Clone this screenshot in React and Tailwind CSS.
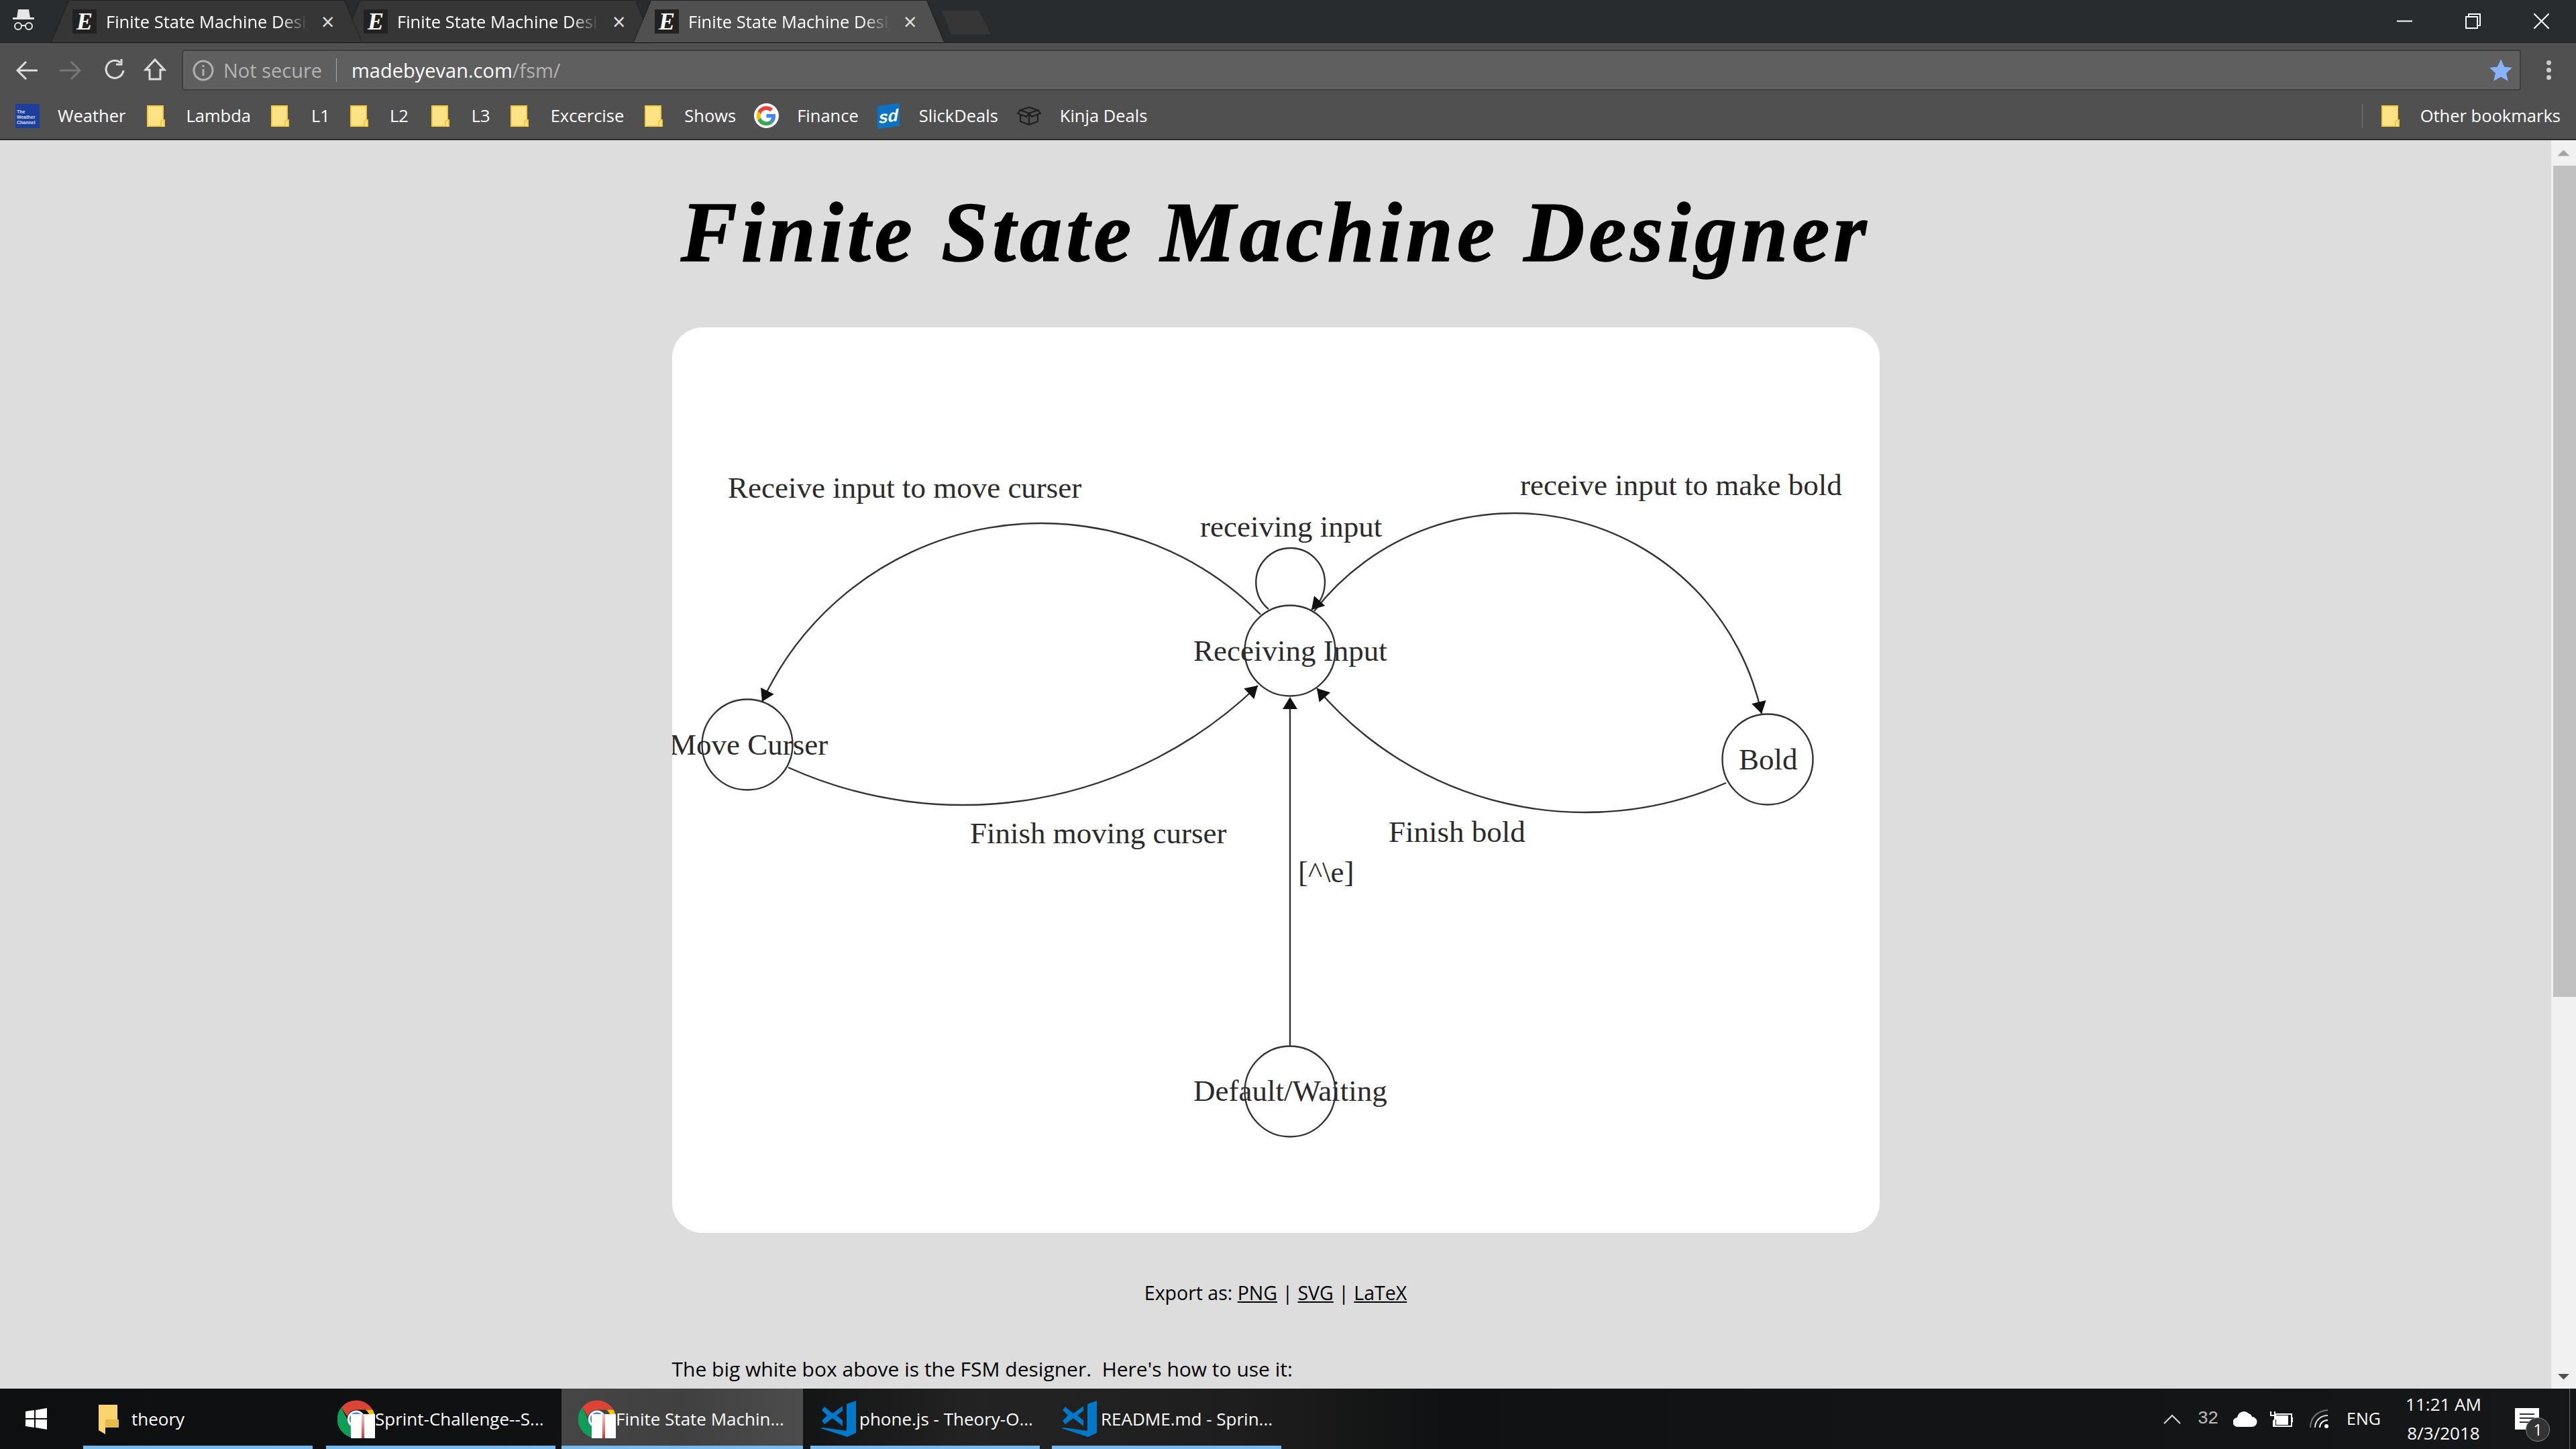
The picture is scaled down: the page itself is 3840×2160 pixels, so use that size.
import React from 'react';

// circle through three points -> svg arc plus the arrow head at the last point
function arcThrough(a, m, b) {
  const d = 2 * (a[0] * (m[1] - b[1]) + m[0] * (b[1] - a[1]) + b[0] * (a[1] - m[1]));
  const s = (p) => p[0] * p[0] + p[1] * p[1];
  const cx = (s(a) * (m[1] - b[1]) + s(m) * (b[1] - a[1]) + s(b) * (a[1] - m[1])) / d;
  const cy = (s(a) * (b[0] - m[0]) + s(m) * (a[0] - b[0]) + s(b) * (m[0] - a[0])) / d;
  const r = Math.hypot(a[0] - cx, a[1] - cy);
  const cross = (m[0] - a[0]) * (b[1] - a[1]) - (m[1] - a[1]) * (b[0] - a[0]);
  const sweep = cross > 0 ? 1 : 0;
  const ang = (p) => Math.atan2(p[1] - cy, p[0] - cx);
  let delta = ang(b) - ang(a);
  if (sweep && delta < 0) delta += Math.PI * 2;
  if (!sweep && delta > 0) delta -= Math.PI * 2;
  const large = Math.abs(delta) > Math.PI ? 1 : 0;
  // tangent at the end of the arc, pulled in a little so the head sits on the chord
  const t = ang(b) + (sweep ? Math.PI / 2 : -Math.PI / 2) + (sweep ? -9 / r : 9 / r);
  return {
    path: `M${a[0]} ${a[1]} A${r} ${r} 0 ${large} ${sweep} ${b[0]} ${b[1]}`,
    head: arrowHead(b[0], b[1], t),
  };
}

function arrowHead(x, y, t) {
  const dx = Math.cos(t);
  const dy = Math.sin(t);
  return `${x},${y} ${x - 18 * dx + 11 * dy},${y - 18 * dy - 11 * dx} ${x - 18 * dx - 11 * dy},${y - 18 * dy + 11 * dx}`;
}

// coordinates are page pixels minus the canvas origin (1002, 488)
const o = (x, y) => [x - 1002, y - 488];
const arcs = [
  arcThrough(o(1879, 916), o(1548, 780), o(1136, 1046)),
  arcThrough(o(1175, 1144), o(1440, 1200), o(1875, 1022)),
  arcThrough(o(1959, 911), o(2256, 765), o(2626, 1064)),
  arcThrough(o(2573, 1167), o(2359, 1211), o(1963, 1026)),
  arcThrough(o(1891, 908), o(1923, 817), o(1955, 909)),
];

const states = [
  [921, 482],
  [112, 622],
  [1633, 644],
  [921, 1139],
];

const labels = [
  { t: 'Receive input to move curser', x: 83, y: 254 },
  { t: 'receiving input', x: 787, y: 312 },
  { t: 'receive input to make bold', x: 1264, y: 250 },
  { t: 'Receiving Input', x: 777, y: 497 },
  { t: 'Move Curser', x: -4, y: 637 },
  { t: 'Finish moving curser', x: 444, y: 769 },
  { t: 'Finish bold', x: 1068, y: 767 },
  { t: '[^\\e]', x: 933, y: 827 },
  { t: 'Bold', x: 1590, y: 659 },
  { t: 'Default/Waiting', x: 777, y: 1153 },
];

function Diagram() {
  return (
    <svg viewBox="0 0 1800 1350" className="block w-[1800px] h-[1350px] font-['Liberation_Serif',serif] text-[45px]">
      {states.map(([cx, cy]) => (
        <circle key={cx + '-' + cy} cx={cx} cy={cy} r="67.5" fill="none" stroke="#333" strokeWidth="2.4" />
      ))}
      {arcs.map((a) => (
        <g key={a.path}>
          <path d={a.path} fill="none" stroke="#333" strokeWidth="2.4" />
          <polygon points={a.head} fill="#111" />
        </g>
      ))}
      <line x1="921" y1="1071" x2="921" y2="560" stroke="#333" strokeWidth="2.4" />
      <polygon points={arrowHead(921, 551, -Math.PI / 2)} fill="#111" />
      {labels.map((l) => (
        <text key={l.t} x={l.x} y={l.y} fill="#2b2b2b">{l.t}</text>
      ))}
    </svg>
  );
}

function Favicon() {
  return (
    <span className="w-[36px] h-[36px] shrink-0 bg-[#222] flex items-center justify-center font-['Liberation_Serif',serif] font-bold italic text-[36px] leading-none text-white">E</span>
  );
}

function Tab({ active, wrap, children }) {
  return (
    <div className={`relative w-[462px] h-[62px] -ml-[28px] first:ml-0 drop-shadow-[0_0_1px_#111] ${wrap}`}>
      <div className={`w-full h-full pl-[31px] flex items-center [clip-path:polygon(26px_0,436px_0,462px_100%,0_100%)] ${active ? 'bg-[#505050]' : 'bg-[#363636]'}`}>
        <Favicon />
        <span className="ml-[14px] w-[301px] overflow-hidden whitespace-nowrap text-[25.5px] text-white [mask-image:linear-gradient(90deg,#000_86%,transparent)]">{children}</span>
        <span className="ml-[20px] text-[34px] leading-none text-[#ddd]">×</span>
      </div>
    </div>
  );
}

function Incognito() {
  return (
    <svg width="32" height="32" viewBox="0 0 32 32" fill="none">
      <path d="M8 1h16l2 13H6z" fill="#e6e6e6" />
      <rect x="0" y="13" width="32" height="3" fill="#e6e6e6" />
      <circle cx="8" cy="26" r="5" stroke="#e6e6e6" strokeWidth="2" />
      <circle cx="24" cy="26" r="5" stroke="#e6e6e6" strokeWidth="2" />
      <path d="M13 25h6" stroke="#e6e6e6" strokeWidth="2" />
    </svg>
  );
}

function Folder() {
  return (
    <svg width="27" height="32" viewBox="0 0 27 32" className="shrink-0">
      <path d="M1 1h23v23h2v7H1z" fill="#fee286" stroke="#f2c93f" strokeWidth="2" />
      <path d="M21 31v-7l3-2h2v9" fill="#fee286" stroke="#f2c93f" strokeWidth="2" />
    </svg>
  );
}

function Bookmark({ icon, label, className }) {
  return (
    <div className={`flex items-center shrink-0 ${className}`}>
      {icon}
      <span className="whitespace-nowrap">{label}</span>
    </div>
  );
}

function WeatherIcon() {
  return (
    <div className="w-[36px] h-[36px] bg-[#1c3f9e] text-[7px] leading-[8px] text-white/80 pl-[2px] pt-[8px] font-['Liberation_Sans',sans-serif] font-bold">
      The Weather Channel
    </div>
  );
}

function GoogleIcon() {
  return (
    <svg width="37" height="37" viewBox="0 0 48 48" className="shrink-0">
      <circle cx="24" cy="24" r="24" fill="#fff" />
      <path d="M24 13a11 11 0 0 1 7.4 2.9l5.4-5.4A19 19 0 0 0 7 15.6l6.3 4.9A11.4 11.4 0 0 1 24 13z" fill="#ea4335" />
      <path d="M41.6 24.6c0-1.3-.1-2.6-.4-3.8H24v7.2h9.9a8.500 8.500 0 0 1-3.700 5.600l6 4.600c3.500-3.200 5.400-8 5.400-13.600z" fill="#4285f4" />
      <path d="M13.300 28.200a11.400 11.400 0 0 1 0-7.700L7 15.600a19 19 0 0 0 0 17.500z" fill="#fbbc05" />
      <path d="M24 43c5.100 0 9.400-1.700 12.200-4.600l-6-4.600c-1.600 1.100-3.600 1.800-6.200 1.800-4.900 0-9-3.300-10.700-7.600L7 33a19 19 0 0 0 17 10z" fill="#34a853" />
    </svg>
  );
}

function SlickIcon() {
  return (
    <div className="w-[33px] h-[34px] bg-[#0b72c4] -skew-y-[8deg] flex items-center justify-center font-['Liberation_Sans',sans-serif] font-bold italic text-[25px] leading-none text-white">
      sd
    </div>
  );
}

function BoxIcon() {
  return (
    <svg width="36" height="28" viewBox="0 0 36 28" fill="none" stroke="#1d1d1d" strokeWidth="2">
      <path d="M18 1 31 5 18 10 5 5zM5 5 1 10l13 5 4-5 4 5 13-5-4-5M5 12v10l13 5 13-5V12M18 10v17" />
    </svg>
  );
}

function ChromeIcon() {
  return (
    <div className="relative w-[56px] h-[57px] shrink-0">
      <svg width="56" height="57" viewBox="0 0 48 48">
        <path d="M24 0a24 24 0 0 1 21 12H24a12 12 0 0 0-11.500 8.500L5 9A24 24 0 0 1 24 0z" fill="#db4437" />
        <path d="M45 12a24 24 0 0 1-14 35l10-22a12 12 0 0 0-5-13z" fill="#f4c20d" />
        <path d="M5 9l8 16a12 12 0 0 0 14 8l-5 15A24 24 0 0 1 5 9z" fill="#0f9d58" />
        <circle cx="24" cy="24" r="10" fill="#4285f4" stroke="#fff" strokeWidth="2.500" />
      </svg>
      <div className="absolute right-0 bottom-0 w-[36px] h-[36px] bg-white flex justify-center">
        <div className="w-[4px] h-full bg-gradient-to-b from-[#f3c4c4] to-[#d92a2a]" />
      </div>
    </div>
  );
}

function CodeIcon() {
  return (
    <svg width="54" height="54" viewBox="0 0 54 54" className="shrink-0">
      <path d="M39 5 53 0v48l-13 6L0 41l4-1 35 5z" fill="#0079cb" />
      <path d="M33 8v30L18 26 6 35l-4-5 8-8-8-8 4-5 12 10zM33 15l-9 7 9 7z" fill="#0079cb" fillRule="evenodd" />
    </svg>
  );
}

function TaskItem({ icon, label, className, active }) {
  return (
    <div className={`relative h-full flex items-center shrink-0 text-[26px] text-white ${active ? 'bg-[linear-gradient(90deg,#454545,#404040_50%,#4b4c4b)]' : ''} ${className}`}>
      {icon}
      <span className="whitespace-nowrap">{label}</span>
      <div className="absolute left-0 right-0 bottom-0 h-[5px] bg-[#76b9ed]" />
    </div>
  );
}

function Toolbar() {
  return (
    <div className="h-[71px] pt-[10px] bg-[#505050] flex items-center shrink-0">
      <svg width="250" height="40" viewBox="0 0 250 40" fill="none" className="ml-[16px] shrink-0" strokeWidth="3">
        <path d="M40 20H12m11-13L10 20l13 13" stroke="#ddd" />
        <path d="M73 20h28m-11-13 13 13-13 13" stroke="#777" />
        <path d="M163 8a13 13 0 1 0 5 12M165 3v8h-8" stroke="#ddd" />
        <path d="M201 19l14-15 14 15h-6v14h-16V19z" stroke="#ddd" />
      </svg>
      <div className="ml-[5px] w-[3487px] h-[61px] bg-[#5f5f5f] border-2 border-[#3e3e3e] rounded-[4px] flex items-center pl-[14px] pr-[11px] text-[29px]">
        <svg width="32" height="32" viewBox="0 0 32 32" fill="none" stroke="#b0b0b0" strokeWidth="3" className="shrink-0">
          <circle cx="16" cy="16" r="14" />
          <path d="M16 14v10M16 8v3" />
        </svg>
        <span className="ml-[14px] text-[#b4b4b4] whitespace-nowrap w-[149px]">Not secure</span>
        <div className="ml-[19px] w-[1px] h-[35px] bg-[#aaa]" />
        <span className="ml-[22px] text-white whitespace-nowrap">madebyevan.com<span className="text-[#b4b4b4]">/fsm/</span></span>
        <svg width="34" height="33" viewBox="0 0 24 23" className="ml-auto shrink-0">
          <path d="M12 0l3.700 8.200 8.300.7-6.300 5.700 1.900 8.400L12 18.600 4.400 23l1.900-8.400L0 8.900l8.300-.7z" fill="#88b3f9" />
        </svg>
      </div>
      <div className="ml-[38px] flex flex-col gap-[4px]">
        <span className="w-[7px] h-[7px] rounded-full bg-[#ccc]" />
        <span className="w-[7px] h-[7px] rounded-full bg-[#ccc]" />
        <span className="w-[7px] h-[7px] rounded-full bg-[#ccc]" />
      </div>
    </div>
  );
}

function BookmarkBar() {
  return (
    <div className="h-[74px] pt-[3px] bg-[#505050] border-b-2 border-[#2a2a2a] flex items-center pl-[23px] pr-[23px] text-[25.5px] text-white shrink-0">
      <Bookmark icon={<WeatherIcon />} label="Weather" className="gap-[27px]" />
      <Bookmark icon={<Folder />} label="Lambda" className="ml-[31px] gap-[32px]" />
      <Bookmark icon={<Folder />} label="L1" className="ml-[30px] gap-[33px]" />
      <Bookmark icon={<Folder />} label="L2" className="ml-[30px] gap-[32px]" />
      <Bookmark icon={<Folder />} label="L3" className="ml-[34px] gap-[33px]" />
      <Bookmark icon={<Folder />} label="Excercise" className="ml-[30px] gap-[33px]" />
      <Bookmark icon={<Folder />} label="Shows" className="ml-[31px] gap-[32px]" />
      <Bookmark icon={<GoogleIcon />} label="Finance" className="ml-[27px] gap-[27px]" />
      <Bookmark icon={<SlickIcon />} label="SlickDeals" className="ml-[28px] gap-[29px]" />
      <Bookmark icon={<BoxIcon />} label="Kinja Deals" className="ml-[28px] gap-[28px]" />
      <div className="ml-auto w-[1px] h-[36px] bg-[#777]" />
      <Bookmark icon={<Folder />} label="Other bookmarks" className="ml-[28px] gap-[31px]" />
    </div>
  );
}

function TabStrip() {
  return (
    <div className="h-[64px] bg-[#292c2f] border-b border-[#1c1c1c] flex items-end relative shrink-0">
      <div className="absolute left-[19px] top-[13px]"><Incognito /></div>
      <div className="ml-[77px] flex items-end">
        <Tab wrap="z-20">Finite State Machine Designer</Tab>
        <Tab wrap="z-10">Finite State Machine Designer</Tab>
        <Tab wrap="z-30" active>Finite State Machine Designer</Tab>
      </div>
      <div className="ml-[-3px] mb-[12px] w-[73px] h-[35px] bg-[#363636] [clip-path:polygon(0_0,55px_0,73px_100%,14px_100%)]" />
      <div className="ml-auto mr-[40px] self-center flex items-center gap-[79px]">
        <svg width="23" height="23" viewBox="0 0 23 23"><path d="M0 11.500h23" stroke="#fff" strokeWidth="2" /></svg>
        <svg width="23" height="23" viewBox="0 0 23 23" fill="none" stroke="#fff" strokeWidth="2"><rect x="1" y="5" width="17" height="17" /><path d="M5 5V1h17v17h-4" /></svg>
        <svg width="23" height="23" viewBox="0 0 23 23" stroke="#fff" strokeWidth="2"><path d="M0 0l23 23M23 0 0 23" /></svg>
      </div>
    </div>
  );
}

function Scrollbar() {
  return (
    <div className="w-[37px] h-full bg-[#f1f1f1] flex flex-col items-center shrink-0">
      <div className="h-[38px] w-full flex items-center justify-center shrink-0">
        <div className="w-[18px] h-[9px] bg-[#a3a3a3] [clip-path:polygon(50%_0,100%_100%,0_100%)]" />
      </div>
      <div className="h-[1239px] w-[34px] ml-[2px] bg-[#c1c1c1] shrink-0" />
      <div className="mt-auto h-[36px] w-full flex items-center justify-center shrink-0">
        <div className="w-[18px] h-[9px] bg-[#505050] [clip-path:polygon(0_0,100%_0,50%_100%)]" />
      </div>
    </div>
  );
}

function Tray() {
  return (
    <div className="ml-auto h-full flex items-center text-white text-[25px] shrink-0">
      <svg width="26" height="15" viewBox="0 0 26 15" fill="none" stroke="#ddd" strokeWidth="2"><path d="M1 14 13 2l12 12" /></svg>
      <span className="ml-[25px] text-[#bbb] font-['Liberation_Mono',monospace] font-light text-[27px] tracking-[-1px]">32</span>
      <svg width="36" height="24" viewBox="0 0 36 24" fill="#fff" className="ml-[23px]"><path d="M7 24a7 7 0 0 1-1-14 10 10 0 0 1 17-6 7 7 0 0 1 5 5 7.500 7.500 0 0 1 0 15z" /></svg>
      <svg width="36" height="25" viewBox="0 0 36 25" fill="none" stroke="#fff" strokeWidth="2" className="ml-[18px]">
        <path d="M2 1v6M8 1v6M1 7h8v5l-3 3v9" />
        <rect x="8" y="5" width="25" height="18" />
        <rect x="11" y="8" width="16" height="12" fill="#fff" />
        <path d="M34 10v7" />
      </svg>
      <svg width="30" height="28" viewBox="0 0 30 28" fill="none" className="ml-[24px]">
        <path d="M1 27C1 12 12 2 27 1" stroke="#777" strokeWidth="2" />
        <path d="M8 27c0-10 8-18 19-18" stroke="#ddd" strokeWidth="2" />
        <path d="M15 27c0-6 5-11 12-11" stroke="#fff" strokeWidth="2" />
        <circle cx="25" cy="25" r="3" fill="#fff" />
      </svg>
      <span className="ml-[25px]">ENG</span>
      <div className="ml-[37px] w-[113px] flex flex-col items-center text-[26px] leading-[43px]">
        <span className="whitespace-nowrap">11:21 AM</span>
        <span>8/3/2018</span>
      </div>
      <div className="relative ml-[50px] w-[36px] h-[32px] bg-white flex flex-col gap-[4px] px-[7px] pt-[8px]">
        <div className="h-[2px] bg-[#333]" />
        <div className="h-[2px] bg-[#333]" />
        <div className="h-[2px] bg-[#333]" />
        <div className="absolute left-[16px] top-[14px] w-[36px] h-[36px] rounded-full bg-[#333] border border-[#888] flex items-center justify-center text-[24px] text-white">1</div>
      </div>
      <div className="ml-[45px] w-[1px] h-full bg-[#666]" />
      <div className="w-[9px]" />
    </div>
  );
}

function Taskbar() {
  return (
    <div className="h-[90px] flex items-center bg-[linear-gradient(90deg,#0e0f10_0%,#111213_30%,#232323_38%,#1e1e1e_48%,#101112_56%,#161718_100%)] font-['Open_Sans',sans-serif] shrink-0">
      <svg width="32" height="32" viewBox="0 0 32 32" fill="#fff" className="ml-[38px] shrink-0">
        <path d="M0 5l13-2v12H0zM15 3l17-3v15H15zM0 17h13v12L0 27zM15 17h17v15l-17-3z" />
      </svg>
      <TaskItem className="ml-[54px] w-[342px] pl-[23px] gap-[19px]" label="theory" icon={
        <svg width="30" height="46" viewBox="0 0 30 46" className="shrink-0">
          <path d="M0 2l10 0h18v22h2v12H10v10L0 40z" fill="#fcd46f" />
          <path d="M10 36V24h20v12z" fill="#e8b948" />
        </svg>
      } />
      <TaskItem className="ml-[20px] w-[342px] pl-[17px]" label="Sprint-Challenge--S..." icon={<ChromeIcon />} />
      <TaskItem active className="ml-[9px] w-[360px] pl-[25px] text-[25.5px]" label="Finite State Machin..." icon={<ChromeIcon />} />
      <TaskItem className="ml-[11px] w-[342px] pl-[15px] gap-[4px]" label="phone.js - Theory-O..." icon={<CodeIcon />} />
      <TaskItem className="ml-[18px] w-[342px] pl-[14px] gap-[5px]" label="README.md - Sprin..." icon={<CodeIcon />} />
      <Tray />
    </div>
  );
}

export default function App() {
  return (
    <div className="w-[3840px] h-[2160px] flex flex-col overflow-hidden bg-[#ddd] font-['Open_Sans',sans-serif]">
      <TabStrip />
      <Toolbar />
      <BookmarkBar />
      <div className="flex-1 min-h-0 flex">
        <div className="flex-1 min-w-0 overflow-hidden">
          <div className="w-[1800px] mx-auto">
            <h1 className="h-[279px] pt-[75px] text-center whitespace-nowrap font-['Liberation_Serif',serif] font-bold italic text-[126px] tracking-[6px] leading-[126px] text-black [-webkit-text-stroke:1.5px_black]">
              Finite State Machine Designer
            </h1>
            <div className="bg-white rounded-[45px] overflow-hidden">
              <Diagram />
            </div>
            <p className="mt-[66px] text-center text-[28.5px] leading-[47px] text-black">
              Export as: <a className="underline">PNG</a> | <a className="underline">SVG</a> | <a className="underline">LaTeX</a>
            </p>
            <p className="mt-[66px] text-[30px] leading-[47px] text-black whitespace-pre">
              The big white box above is the FSM designer.  Here's how to use it:
            </p>
          </div>
        </div>
        <Scrollbar />
      </div>
      <Taskbar />
    </div>
  );
}
